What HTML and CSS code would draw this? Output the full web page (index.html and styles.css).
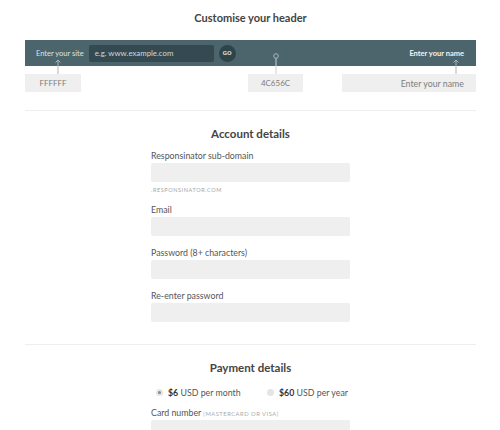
FILE: index.html
```html
<!DOCTYPE html>
<html>

<head>
    <meta charset="utf-8" />
    <title>Responsinator signup</title>
    <link rel="stylesheet" href="styles.css">
</head>

<body>
    <div class="page">
        <section class="customise">
            <h2 class="heading">Customise your header</h2>
            <div class="bar">
                <span class="bar-label">Enter your site</span>
                <div class="site-input">e.g. www.example.com</div>
                <div class="go">GO</div>
                <div class="bar-name">Enter your name</div>
            </div>
            <div class="swatches">
                <div class="swatch swatch-text">
                    <svg class="link link-arrow" width="8" height="15" viewBox="0 0 8 15">
                        <path d="M4 15V1M1.5 3.5L4 1l2.5 2.5" fill="none" stroke="#a9b7ba" stroke-width="1" />
                    </svg>
                    FFFFFF
                </div>
                <div class="swatch swatch-bg">
                    <svg class="link link-dot" width="8" height="21" viewBox="0 0 8 21">
                        <circle cx="4" cy="3" r="2.3" fill="none" stroke="#a9b7ba" stroke-width="1" />
                        <path d="M4 5.3V21" stroke="#c9d1d3" stroke-width="1" />
                    </svg>
                    4C656C
                </div>
                <div class="swatch swatch-name">
                    <svg class="link link-arrow-right" width="8" height="15" viewBox="0 0 8 15">
                        <path d="M4 15V1M1.5 3.5L4 1l2.5 2.5" fill="none" stroke="#a9b7ba" stroke-width="1" />
                    </svg>
                    Enter your name
                </div>
            </div>
        </section>

        <section class="block">
            <h2 class="heading">Account details</h2>
            <div class="form">
                <div class="field">
                    <label>Responsinator sub-domain</label>
                    <div class="input"></div>
                    <div class="hint">.RESPONSINATOR.COM</div>
                </div>
                <div class="field">
                    <label>Email</label>
                    <div class="input"></div>
                </div>
                <div class="field">
                    <label>Password (8+ characters)</label>
                    <div class="input"></div>
                </div>
                <div class="field">
                    <label>Re-enter password</label>
                    <div class="input"></div>
                </div>
            </div>
        </section>

        <section class="block">
            <h2 class="heading">Payment details</h2>
            <div class="form">
                <div class="plans">
                    <div class="plan"><span class="radio checked"></span><b>$6</b>&nbsp;USD per month</div>
                    <div class="plan"><span class="radio"></span><b>$60</b>&nbsp;USD per year</div>
                </div>
                <div class="field">
                    <label>Card number <small>(MASTERCARD OR VISA)</small></label>
                    <div class="input"></div>
                </div>
            </div>
        </section>
    </div>
</body>

</html>
```

FILE: styles.css
```css
* {
    margin: 0;
    padding: 0;
    box-sizing: border-box;
}

body {
    background: #fff;
    font-family: Lato, "Open Sans", sans-serif;
    color: #555;
}

.page {
    padding: 0 24px 0 25px;
}

.heading {
    text-align: center;
    font-size: 11px;
    font-weight: 700;
    color: #444;
}

.customise {
    padding-top: 11px;
    padding-bottom: 18px;
    border-bottom: 1px solid #eee;
}

.customise .heading {
    margin-bottom: 16px;
}

/* header preview bar */
.bar {
    height: 26px;
    background: #4C656C;
    display: flex;
    align-items: center;
    padding: 0 12px 0 11px;
    color: #dde4e5;
    font-size: 7.5px;
}

.bar-label {
    margin-right: 5px;
}

.site-input {
    width: 125px;
    height: 17px;
    background: #344a50;
    border-radius: 2px;
    color: #cfd8da;
    display: flex;
    align-items: center;
    padding-left: 6px;
    font-size: 7.8px;
}

.go {
    width: 17px;
    height: 17px;
    border-radius: 50%;
    background: #2f4449;
    color: #c8d2d4;
    font-family: "DejaVu Sans", sans-serif;
    font-size: 5.5px;
    font-weight: 700;
    display: flex;
    align-items: center;
    justify-content: center;
    margin-left: 5px;
}

.bar-name {
    margin-left: auto;
    font-weight: 700;
    color: #f2f5f5;
}

.swatches {
    display: flex;
    margin-top: 8px;
}

.swatch {
    position: relative;
    height: 18px;
    background: #efefef;
    color: #7d7d7d;
    font-size: 8px;
    display: flex;
    align-items: center;
    justify-content: center;
}

.swatch-text {
    width: 56px;
}

.swatch-bg {
    width: 55px;
    margin-left: 167px;
}

.swatch-name {
    width: 134px;
    margin-left: auto;
    justify-content: flex-end;
    padding-right: 12px;
    font-size: 8.8px;
}

.link {
    position: absolute;
    bottom: 100%;
}

.link-arrow {
    left: 29px;
}

.link-dot {
    left: 24px;
}

.link-arrow-right {
    right: 16px;
}

/* form sections */
.block {
    padding-top: 16px;
    padding-bottom: 22px;
    border-bottom: 1px solid #eee;
}

.block .heading {
    font-size: 11.5px;
    margin-bottom: 10px;
}

.form {
    width: 199px;
    margin-left: 126px;
    display: flex;
    flex-direction: column;
    gap: 11px;
}

.field label {
    display: block;
    font-size: 8.8px;
    color: #555;
    margin-bottom: 2px;
}

.field label small {
    font-size: 5.8px;
    letter-spacing: 0.5px;
    color: #aaa;
}

.input {
    height: 19px;
    background: #efefef;
    border-radius: 2px;
}

.hint {
    font-size: 5.5px;
    letter-spacing: 0.6px;
    color: #a5a5a5;
    margin-top: 5px;
}

.plans {
    display: flex;
    justify-content: space-between;
    font-size: 8.8px;
    color: #555;
    padding-left: 5px;
    padding-right: 2px;
    margin-top: 3px;
    margin-bottom: -2px;
}

.plan {
    display: flex;
    align-items: center;
}

.plan b {
    color: #333;
    font-weight: 700;
}

.radio {
    width: 7px;
    height: 7px;
    border-radius: 50%;
    background: #e4e4e4;
    margin-right: 5px;
    display: flex;
    align-items: center;
    justify-content: center;
}

.radio.checked::after {
    content: "";
    width: 3px;
    height: 3px;
    border-radius: 50%;
    background: #888;
}
```
